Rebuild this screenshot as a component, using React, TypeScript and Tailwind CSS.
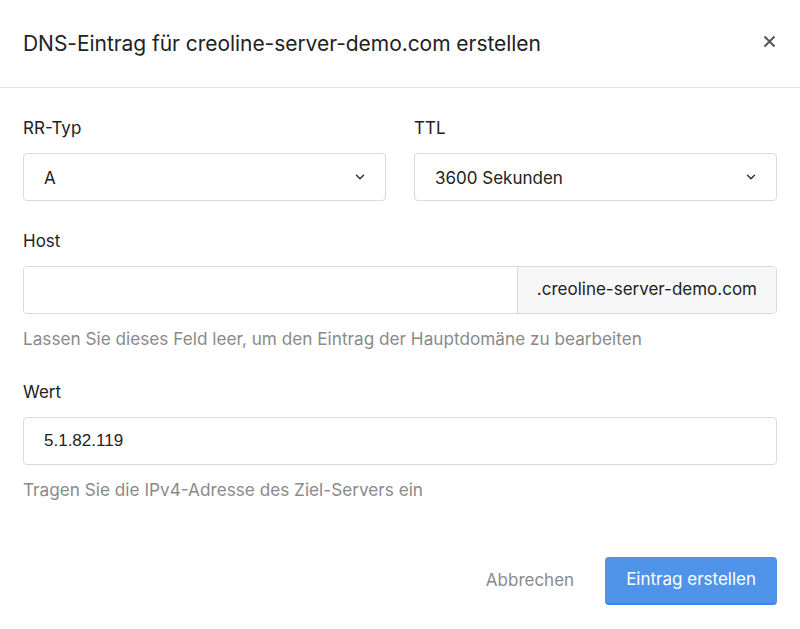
import { ChevronDown } from 'lucide-react';

function Label({ children }: { children: React.ReactNode }) {
  return <label className="block text-[17px] leading-[20px] text-[#222] mb-[15px]">{children}</label>;
}

function SelectBox({ value }: { value: string }) {
  return (
    <div className="flex items-center justify-between h-[48px] rounded-[4px] border border-[#dadada] bg-white pl-[20px] pr-[18px]">
      <span className="text-[17px] text-[#222] pt-[3px]">{value}</span>
      <ChevronDown className="w-[14px] h-[14px] text-[#333]" strokeWidth={2.5} />
    </div>
  );
}

function Help({ children }: { children: React.ReactNode }) {
  return <p className="mt-[15px] text-[17.2px] leading-[20px] text-[#8a8a8a]">{children}</p>;
}

export default function App() {
  return (
    <div className="w-[800px] h-[629px] bg-white font-['Inter',sans-serif] text-[#222]">
      {/* Header */}
      <div className="flex items-center justify-between h-[88px] px-[23px] border-b border-[#e3e3e3]">
        <h2 className="text-[21px] text-[#222] tracking-[-0.05px]">
          DNS-Eintrag für creoline-server-demo.com erstellen
        </h2>
        <button className="mr-[1px] mb-[4px] text-[#555]" aria-label="Schließen">
          <svg width="13" height="13" viewBox="0 0 13 13" fill="none" stroke="currentColor" strokeWidth="2">
            <path d="M1.5 1.5 L11.5 11.5 M11.5 1.5 L1.5 11.5" />
          </svg>
        </button>
      </div>

      {/* Body */}
      <div className="px-[23px] pt-[30px]">
        <div className="grid grid-cols-2 gap-[28px]">
          <div>
            <Label>RR-Typ</Label>
            <SelectBox value="A" />
          </div>
          <div>
            <Label>TTL</Label>
            <SelectBox value="3600 Sekunden" />
          </div>
        </div>

        <div className="mt-[30px]">
          <Label>Host</Label>
          <div className="flex h-[48px] rounded-[4px] border border-[#dadada] overflow-hidden">
            <input className="flex-1 px-[20px] outline-none bg-white" />
            <div className="flex items-center px-[19px] bg-[#f7f7f7] border-l border-[#dadada] text-[17px] text-[#222]">
              .creoline-server-demo.com
            </div>
          </div>
          <Help>Lassen Sie dieses Feld leer, um den Eintrag der Hauptdomäne zu bearbeiten</Help>
        </div>

        <div className="mt-[33px]">
          <Label>Wert</Label>
          <div className="flex items-center h-[48px] rounded-[4px] border border-[#dadada] px-[20px] text-[17px] text-[#222] font-['Liberation_Sans',sans-serif]">
            5.1.82.119
          </div>
          <Help>Tragen Sie die IPv4-Adresse des Ziel-Servers ein</Help>
        </div>

        <div className="flex items-center justify-end gap-[31px] mt-[57px]">
          <button className="text-[17px] text-[#8a8a8a]">Abbrechen</button>
          <button className="h-[48px] px-[21px] rounded-[4px] bg-[#5094ea] border-b-2 border-[#3a86e8] text-white text-[17px]">
            Eintrag erstellen
          </button>
        </div>
      </div>
    </div>
  );
}
